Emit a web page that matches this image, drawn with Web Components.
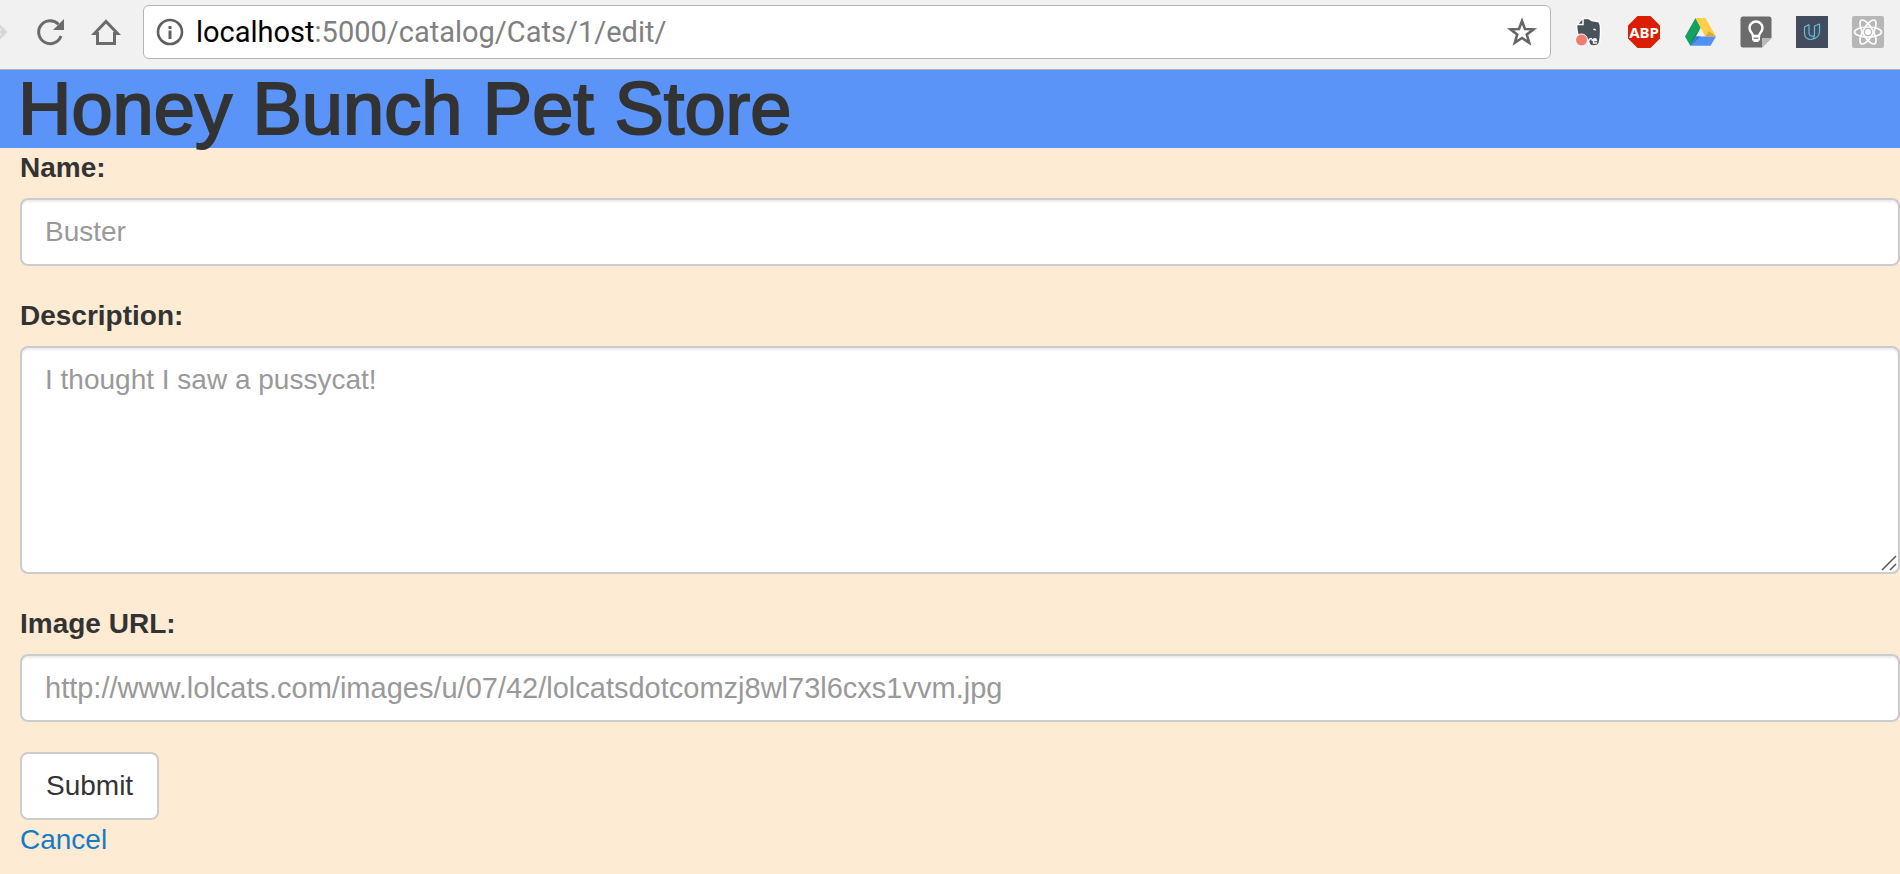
<!DOCTYPE html>
<html lang="en">
<head>
<meta charset="utf-8">
<meta name="viewport" content="width=device-width, initial-scale=1">
<title>Honey Bunch Pet Store</title>
<style>
html { min-height: 100%; background: #fdebd3; }
body { margin: 0; font-family: "Helvetica Neue", "Liberation Sans", Arial, sans-serif; font-size: 28px; line-height: 40px; color: #333; }
</style>
</head>
<body>
<browser-bar host="localhost" path=":5000/catalog/Cats/1/edit/"></browser-bar>
<store-header>Honey Bunch Pet Store</store-header>
<pet-form>
  <form-field label="Name:" name="name" placeholder="Buster"></form-field>
  <form-field label="Description:" name="description" placeholder="I thought I saw a pussycat!" rows="5"></form-field>
  <form-field label="Image URL:" name="image" type="url" placeholder="http://www.lolcats.com/images/u/07/42/lolcatsdotcomzj8wl73l6cxs1vvm.jpg"></form-field>
</pet-form>

<script>
const icons = {
  forward: `<svg width="10" height="32" viewBox="0 0 10 32"><path d="M-6 16H4M-3 7.500L5.500 16L-3 24.500" fill="none" stroke="#d6d6d6" stroke-width="3"/></svg>`,
  reload: `<svg width="32" height="32" viewBox="0 0 32 32"><path d="M27 20A11.500 11.500 0 1 1 24.500 8.200" fill="none" stroke="#6b6b6b" stroke-width="3"/><path d="M30 3V14H19Z" fill="#6b6b6b"/></svg>`,
  home: `<svg width="32" height="32" viewBox="0 0 32 32"><path d="M4.500 17.500L16 5.500L27.500 17.500H24.500V27.500H7.500V17.500Z" fill="none" stroke="#6b6b6b" stroke-width="3"/></svg>`,
  info: `<svg width="28" height="28" viewBox="0 0 28 28"><circle cx="14" cy="14" r="12" fill="none" stroke="#5f5f5f" stroke-width="2.600"/><path d="M12.500 12.500h3V21h-3zM12.500 8h3v3h-3z" fill="#5f5f5f"/></svg>`,
  star: `<svg width="32" height="32" viewBox="0 0 32 32"><path d="M16 5L19 13L27.500 13.300L20.800 18.500L23.200 26.800L16 22L8.800 26.800L11.200 18.500L4.500 13.300L13 13Z" fill="none" stroke="#666" stroke-width="2.600"/></svg>`,
  evernote: `<svg width="32" height="32" viewBox="0 0 32 32"><path d="M4.500 9L10.500 2.500H17L19.500 4.500L26 5.500Q28 6 28.500 11Q29 22 27 28Q25 30.500 20.500 30Q17 29.500 16.500 25L11 25Q5 23 4.500 9Z" fill="#47525a" stroke="#fff" stroke-width="1.500"/><path d="M5 8.500H11V2.500" fill="none" stroke="#fff" stroke-width="1.500"/><path d="M16.500 25Q17 22.500 20 22.500M19.500 24.500Q24 21 24.500 24.500H21.500V27H25" fill="none" stroke="#fff" stroke-width="1.400"/><path d="M21 14Q22.500 11 24.500 14.500Z" fill="#fff"/><circle cx="9.500" cy="24" r="6" fill="#f17c72" stroke="#fff"/></svg>`,
  adblock: `<svg width="32" height="32" viewBox="0 0 32 32"><path d="M9.500 0H22.500L32 9.500V22.500L22.500 32H9.500L0 22.500V9.500Z" fill="#da1f00"/><text x="16" y="22" text-anchor="middle" font-family="Noto Sans, sans-serif" font-size="15" font-weight="700" fill="#fff">ABP</text></svg>`,
  drive: `<svg width="32" height="32" viewBox="0 0 32 32"><path d="M11.500 2L16.800 11.300L6.300 29.800L1 20.500Z" fill="#12a15f"/><path d="M11.500 2H21.500L32 20.500H21.300Z" fill="#ffcf48"/><path d="M11.800 20.500H32L26.500 29.800H6.300Z" fill="#4f91f5"/><path d="M16.800 11.300L11.800 20.500L6.300 29.800L9 22Z" fill="#0b8a50"/><path d="M21.300 20.500H32L25 15Z" fill="#d9a93b"/><path d="M11.800 20.500H17L6.300 29.800Z" fill="#3b78dc"/></svg>`,
  keep: `<svg width="32" height="32" viewBox="0 0 32 32"><path d="M3 .500H29Q31.500 .500 31.500 3V22L22 31.500H3Q.500 31.500 .500 29V3Q.500 .500 3 .500Z" fill="#6c6c6c"/><path d="M22 31.500V22H31.500Z" fill="#bbb"/><path d="M13 20C13 17 9.500 16 9.500 12A6.500 6.500 0 0 1 22.500 12C22.500 16 19 17 19 20Z" fill="none" stroke="#fff" stroke-width="2.400"/><path d="M12 19.500H20V24.500H18.500V26H13.500V24.500H12Z" fill="#fff"/><path d="M13.500 22.200H18.500" stroke="#6c6c6c" stroke-width="1.200"/></svg>`,
  udacity: `<svg width="32" height="32" viewBox="0 0 32 32"><path d="M0 0H32V32H0Z" fill="#434c5c"/><path d="M13 8.500L8.500 11V17Q8.500 23.500 15.500 23.500Q18.500 23 18.500 18V10L23.500 8V16Q23 22 15.500 23.500M13 8.500V17Q13 21 18.500 20" fill="none" stroke="#68b9df" stroke-width="1.200" stroke-linejoin="round"/></svg>`,
  react: `<svg width="32" height="32" viewBox="0 0 32 32"><rect width="32" height="32" rx="2" fill="#b7b7b7"/><g fill="none" stroke="#fff" stroke-width="1.700"><ellipse cx="16" cy="16" rx="13.500" ry="5"/><ellipse cx="16" cy="16" rx="13.500" ry="5" transform="rotate(60 16 16)"/><ellipse cx="16" cy="16" rx="13.500" ry="5" transform="rotate(120 16 16)"/></g><circle cx="16" cy="16" r="3" fill="#fff"/></svg>`
};

class IconButton extends HTMLElement {
  connectedCallback() {
    const root = this.attachShadow({ mode: "open" });
    root.innerHTML = `<style>
      :host { display: block; flex: none; }
      button { display: block; margin: 0; padding: 0; border: 0; background: none; }
      svg { display: block; }
    </style><button type="button" aria-label="${this.getAttribute("label")}">${icons[this.getAttribute("icon")]}</button>`;
  }
}

class BrowserBar extends HTMLElement {
  connectedCallback() {
    const root = this.attachShadow({ mode: "open" });
    root.innerHTML = `<style>
      :host { display: flex; align-items: center; box-sizing: border-box; height: 70px; padding: 0 16px 5px 0; background: #f1f1f1; border-bottom: 1px solid #b2b2b2; }
      .nav, .extensions { display: flex; gap: 24px; flex: none; }
      .omnibox { flex: 1; min-width: 0; box-sizing: border-box; display: flex; align-items: center; height: 54px; margin: 0 21px; padding: 0 12px; background: #fff; border: 1px solid #b5b5b5; border-radius: 6px; }
      .url { flex: 1; min-width: 0; margin-left: 12px; overflow: hidden; white-space: nowrap; outline: none; font: 29px/40px Roboto, sans-serif; color: #808080; }
      .host { color: #000; }
    </style>
    <div class="nav">
      <icon-button icon="forward" label="Forward"></icon-button>
      <icon-button icon="reload" label="Reload"></icon-button>
      <icon-button icon="home" label="Home"></icon-button>
    </div>
    <div class="omnibox">
      <icon-button icon="info" label="Site information"></icon-button>
      <div class="url" role="textbox" aria-label="Address" contenteditable="true" spellcheck="false"><span class="host">${this.getAttribute("host")}</span>${this.getAttribute("path")}</div>
      <icon-button icon="star" label="Bookmark"></icon-button>
    </div>
    <div class="extensions">
      <icon-button icon="evernote" label="Web clipper"></icon-button>
      <icon-button icon="adblock" label="Ad blocker"></icon-button>
      <icon-button icon="drive" label="Drive"></icon-button>
      <icon-button icon="keep" label="Notes"></icon-button>
      <icon-button icon="udacity" label="Courses"></icon-button>
      <icon-button icon="react" label="React tools"></icon-button>
    </div>`;
  }
}

class StoreHeader extends HTMLElement {
  connectedCallback() {
    const root = this.attachShadow({ mode: "open" });
    root.innerHTML = `<style>
      :host { display: block; padding: 0 18px; background: #5a94f8; }
      h1 { margin: 0; font-size: 74px; line-height: 78px; font-weight: 500; -webkit-text-stroke: 2px currentColor; white-space: nowrap; }
    </style><h1><slot></slot></h1>`;
  }
}

class FormField extends HTMLElement {
  connectedCallback() {
    const root = this.attachShadow({ mode: "open" });
    const rows = this.getAttribute("rows");
    const type = this.getAttribute("type") || "text";
    const attrs = `id="control" name="${this.getAttribute("name")}" placeholder="${this.getAttribute("placeholder")}"`;
    const grip = `<svg class="grip" width="16" height="16" viewBox="0 0 16 16"><path d="M1 15L15 1M9 15L15 9" stroke="#555" stroke-width="1.500"/></svg>`;
    root.innerHTML = `<style>
      :host { display: block; margin-bottom: 30px; }
      label { display: block; margin-bottom: 10px; font-weight: 700; }
      .box { position: relative; }
      input, textarea { display: block; box-sizing: border-box; width: 100%; margin: 0; padding: 12px 23px; border: 2px solid #ccc; border-radius: 8px; background: #fff; color: #555; font: inherit; line-height: 40px; box-shadow: inset 0 2px 2px rgba(0,0,0,.075); }
      input { height: 68px; }
      input[type="url"] { font-size: 29px; }
      textarea { resize: vertical; }
      textarea::-webkit-resizer { background: none; }
      ::placeholder { color: #999; opacity: 1; }
      .grip { position: absolute; right: 3px; bottom: 3px; pointer-events: none; }
    </style>
    <label for="control">${this.getAttribute("label")}</label>
    <div class="box">${rows ? `<textarea ${attrs} rows="${rows}"></textarea>${grip}` : `<input type="${type}" ${attrs}>`}</div>`;
  }
}

class PetForm extends HTMLElement {
  connectedCallback() {
    const root = this.attachShadow({ mode: "open" });
    root.innerHTML = `<style>
      :host { display: block; padding-left: 20px; }
      form { display: flex; flex-direction: column; align-items: flex-start; }
      ::slotted(*) { align-self: stretch; }
      button { margin: 0; padding: 12px 24px; border: 2px solid #ccc; border-radius: 8px; background: #fff; color: #333; font: inherit; line-height: 40px; }
      a { color: #167ac6; text-decoration: none; }
    </style>
    <form><slot></slot><button type="submit">Submit</button><a href="#catalog">Cancel</a></form>`;
  }
}

customElements.define("icon-button", IconButton);
customElements.define("browser-bar", BrowserBar);
customElements.define("store-header", StoreHeader);
customElements.define("form-field", FormField);
customElements.define("pet-form", PetForm);
</script>
</body>
</html>
